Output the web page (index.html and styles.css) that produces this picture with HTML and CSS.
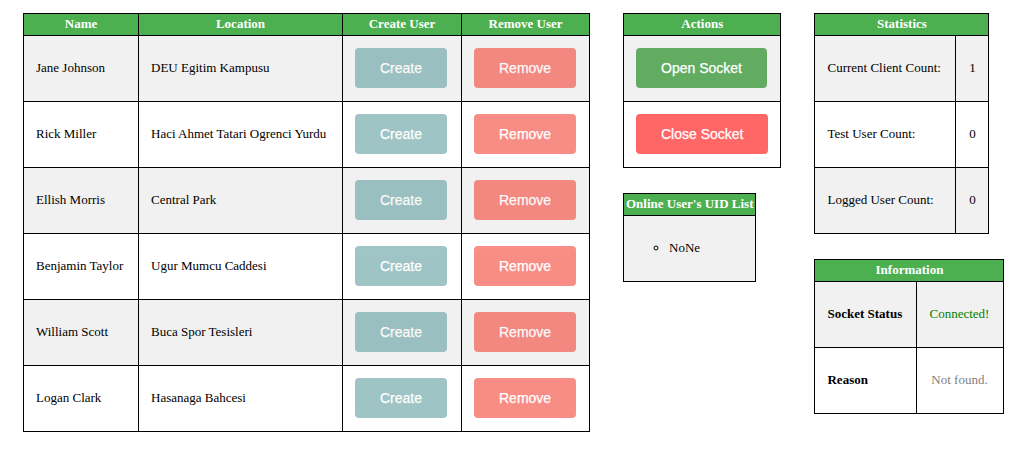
FILE: index.html
```html
<!DOCTYPE html>
<html>
<head>
<meta charset="utf-8">
<link rel="stylesheet" href="styles.css">
</head>
<body>
<div class="page">
  <table class="grid users">
    <thead>
      <tr><th class="c-name">Name</th><th class="c-loc">Location</th><th class="c-create">Create User</th><th class="c-remove">Remove User</th></tr>
    </thead>
    <tbody>
      <tr><td>Jane Johnson</td><td>DEU Egitim Kampusu</td><td><button class="btn btn-create">Create</button></td><td><button class="btn btn-remove">Remove</button></td></tr>
      <tr><td>Rick Miller</td><td>Haci Ahmet Tatari Ogrenci Yurdu</td><td><button class="btn btn-create">Create</button></td><td><button class="btn btn-remove">Remove</button></td></tr>
      <tr><td>Ellish Morris</td><td>Central Park</td><td><button class="btn btn-create">Create</button></td><td><button class="btn btn-remove">Remove</button></td></tr>
      <tr><td>Benjamin Taylor</td><td>Ugur Mumcu Caddesi</td><td><button class="btn btn-create">Create</button></td><td><button class="btn btn-remove">Remove</button></td></tr>
      <tr><td>William Scott</td><td>Buca Spor Tesisleri</td><td><button class="btn btn-create">Create</button></td><td><button class="btn btn-remove">Remove</button></td></tr>
      <tr><td>Logan Clark</td><td>Hasanaga Bahcesi</td><td><button class="btn btn-create">Create</button></td><td><button class="btn btn-remove">Remove</button></td></tr>
    </tbody>
  </table>

  <div class="col">
    <table class="grid actions">
      <thead><tr><th>Actions</th></tr></thead>
      <tbody>
        <tr><td><button class="btn btn-open">Open Socket</button></td></tr>
        <tr><td><button class="btn btn-close">Close Socket</button></td></tr>
      </tbody>
    </table>
    <table class="grid uids">
      <thead><tr><th>Online User's UID List</th></tr></thead>
      <tbody>
        <tr><td><ul class="uid-list"><li>NoNe</li></ul></td></tr>
      </tbody>
    </table>
  </div>

  <div class="col">
    <table class="grid stats">
      <thead><tr><th colspan="2">Statistics</th></tr></thead>
      <tbody>
        <tr><td class="label">Current Client Count:</td><td class="value">1</td></tr>
        <tr><td class="label">Test User Count:</td><td class="value">0</td></tr>
        <tr><td class="label">Logged User Count:</td><td class="value">0</td></tr>
      </tbody>
    </table>
    <table class="grid info">
      <thead><tr><th colspan="2">Information</th></tr></thead>
      <tbody>
        <tr><td class="key">Socket Status</td><td class="status ok">Connected!</td></tr>
        <tr><td class="key">Reason</td><td class="status muted">Not found.</td></tr>
      </tbody>
    </table>
  </div>
</div>
</body>
</html>
```

FILE: styles.css
```css
html, body {
  margin: 0;
  padding: 0;
  background: #ffffff;
}

body {
  font-family: "Liberation Serif", "Times New Roman", serif;
  font-size: 13px;
  color: #000;
}

.page {
  display: flex;
  align-items: flex-start;
  gap: 33px;
  padding: 13px 0 0 23px;
}

.col {
  display: flex;
  flex-direction: column;
  align-items: flex-start;
  gap: 25px;
}

.grid {
  border-collapse: collapse;
}

.grid th,
.grid td {
  border: 1px solid #000;
}

.grid th {
  background: #4caf50;
  color: #fff;
  font-weight: bold;
  font-size: 13px;
  height: 20px;
  padding: 0 2px 1px;
  text-align: center;
  white-space: nowrap;
}

.grid td {
  height: 66px;
  padding: 0 12px 1px;
  box-sizing: border-box;
  vertical-align: middle;
  text-align: left;
  white-space: nowrap;
}

.grid tbody tr:nth-child(odd) td {
  background: #f1f1f1;
}

.grid tbody tr:nth-child(even) td {
  background: #ffffff;
}

.users {
  width: 567px;
  table-layout: fixed;
}
.users th { padding: 0 0 1px; }
.users .c-name { width: 114px; }
.users .c-loc { width: 203px; }
.users .c-create { width: 118px; }
.users .c-remove { width: 127px; }

.actions { width: 158px; }

.btn {
  font-family: "Liberation Sans", Arial, sans-serif;
  font-size: 14px;
  color: #fff;
  -webkit-text-stroke: 0.25px #fff;
  border: none;
  border-radius: 4px;
  padding: 12px 25px;
  line-height: 16px;
  cursor: pointer;
}

.btn-create {
  background: #5f9ea0;
  opacity: 0.6;
}

.btn-remove {
  background: #f44336;
  opacity: 0.6;
}

.btn-open {
  background: #62ac61;
}

.btn-close {
  background: #ff6666;
}

.uids td {
  padding: 0 5px 1px;
}

.uid-list {
  margin: 0;
  padding-left: 40px;
  list-style: circle;
}

.stats { width: 175px; }
.stats .label { padding: 0 12px 1px; }
.stats .value { text-align: center; width: 33px; padding: 0 0 1px; }

.info { width: 190px; }
.info .key {
  font-weight: bold;
  padding: 0 12px 1px;
  width: 102px;
}
.info .status { text-align: center; padding: 0 2px 1px 0; }
.info .ok { color: #008000; }
.info .muted { color: #808080; }
```
